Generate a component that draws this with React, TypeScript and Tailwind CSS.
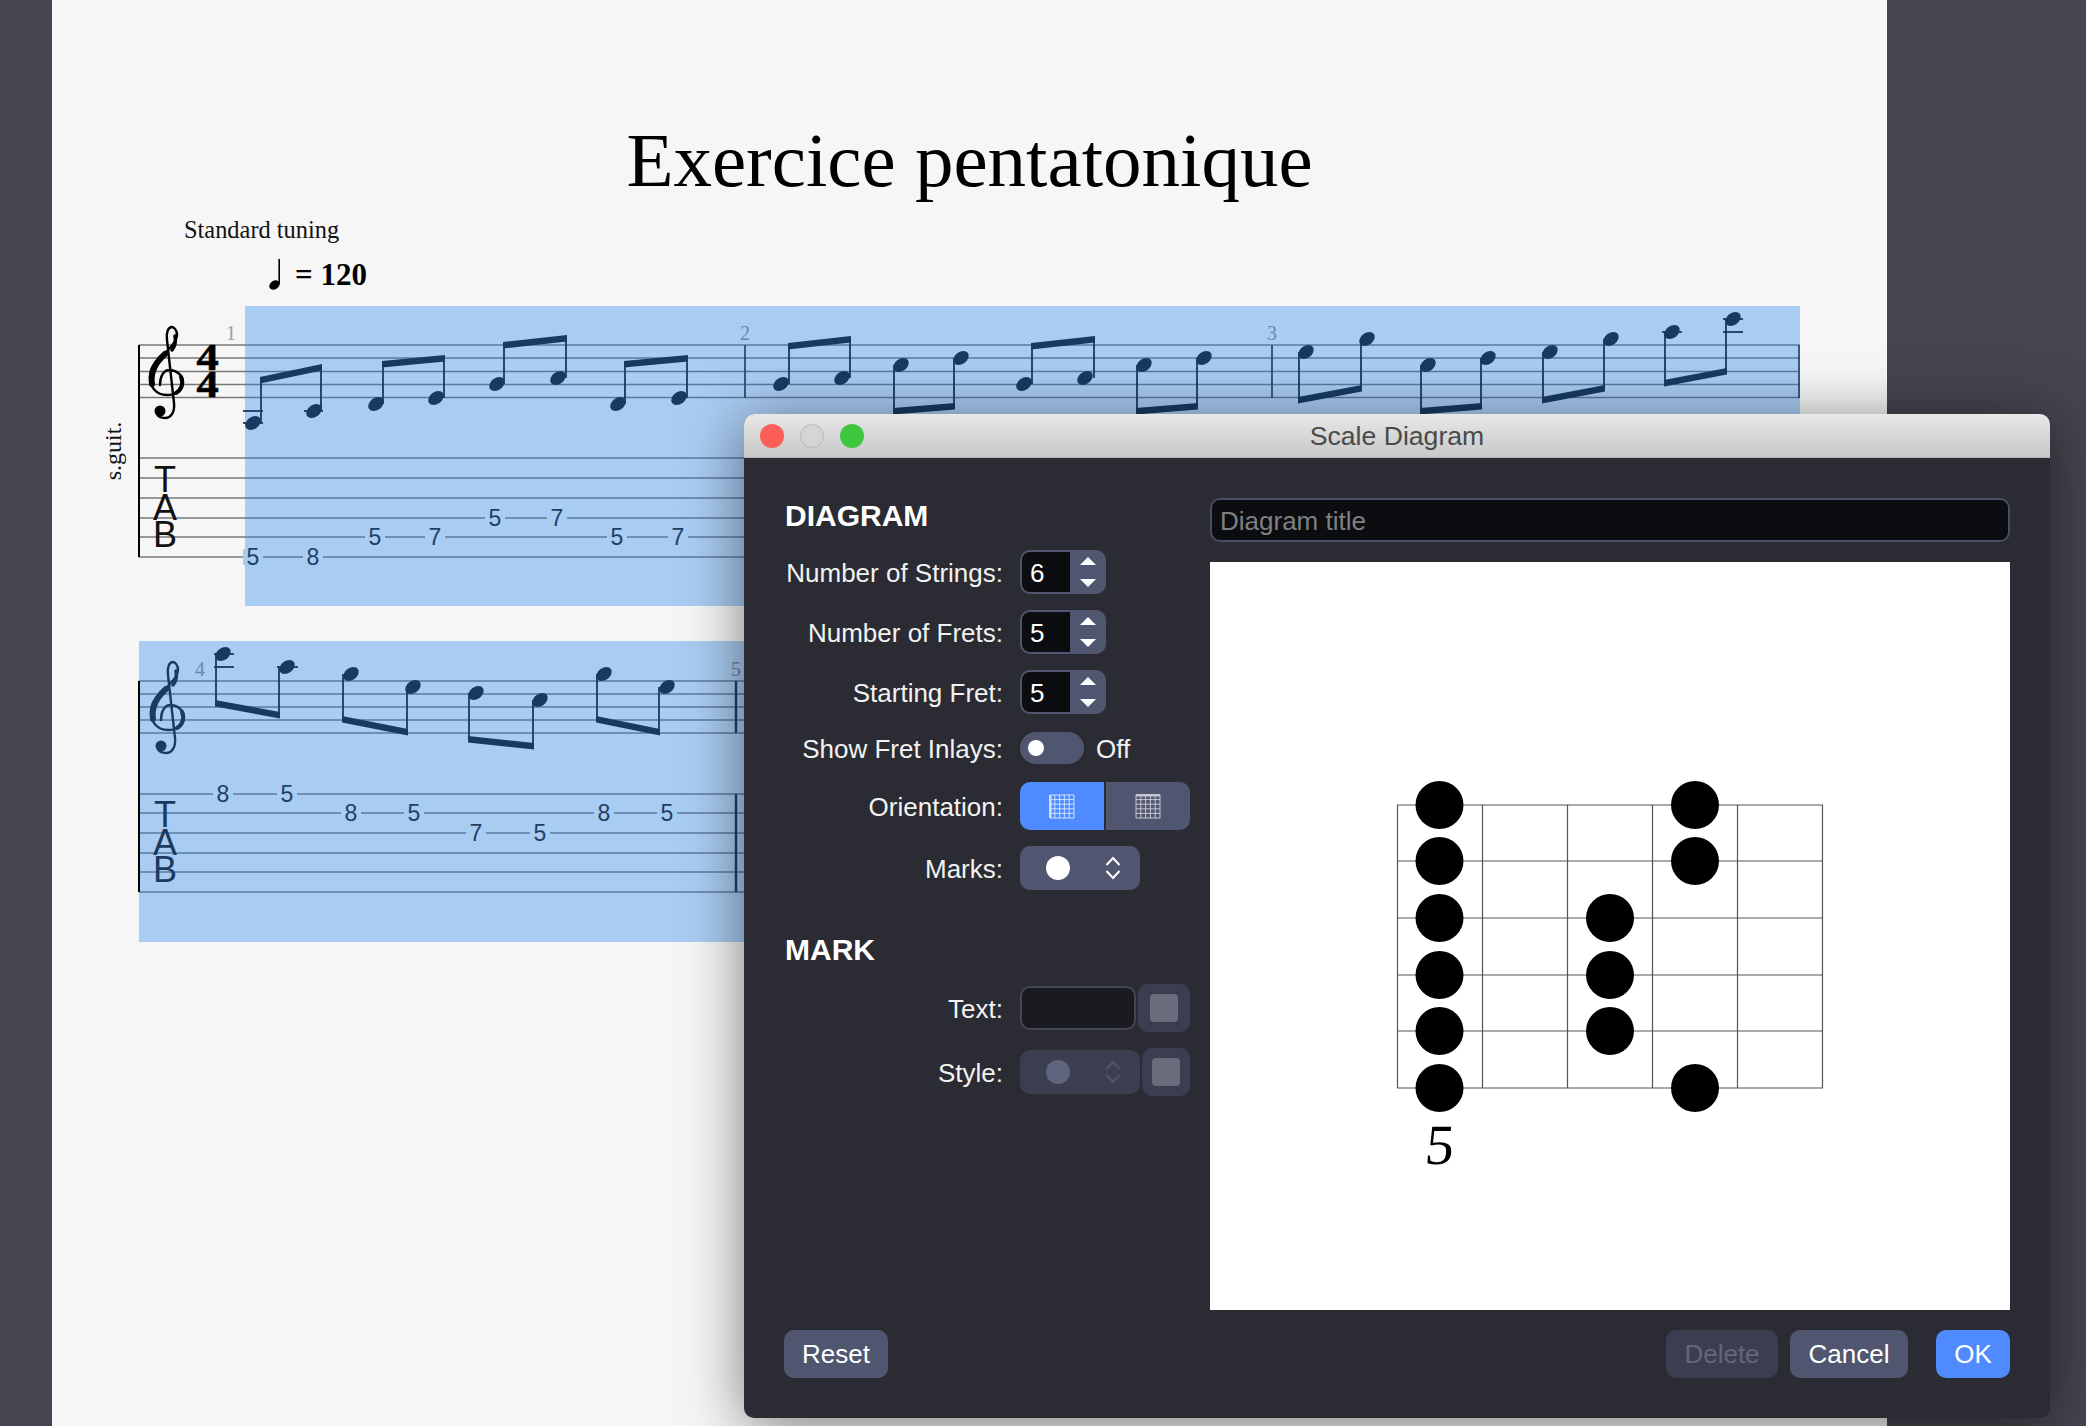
import React from 'react';

const NOTE = '#173a63';
const LINE_BLUE = '#5c7a9f';
const BLUE = '#a9ccf2';

type Group = { heads: [number, number, number][]; beam: [number, number] };

const SYSTEM_ONE: Group[] = [
  { heads: [[253, 423, 261], [314, 411, 321]], beam: [377, 364] },
  { heads: [[376, 404, 383], [436, 398, 444]], beam: [361, 355] },
  { heads: [[497, 384, 504], [558, 378, 566]], beam: [342, 335] },
  { heads: [[618, 404, 625], [679, 398, 687]], beam: [361, 355] },
  { heads: [[781, 384, 789], [842, 378, 850]], beam: [343, 336] },
  { heads: [[901, 365, 894], [961, 358, 954]], beam: [408, 403] },
  { heads: [[1024, 384, 1032], [1085, 378, 1094]], beam: [343, 336] },
  { heads: [[1144, 365, 1137], [1204, 358, 1197]], beam: [408, 403] },
  { heads: [[1306, 352, 1299], [1367, 339, 1361]], beam: [397, 385] },
  { heads: [[1428, 365, 1421], [1488, 358, 1481]], beam: [408, 403] },
  { heads: [[1550, 352, 1543], [1611, 339, 1604]], beam: [397, 385] },
  { heads: [[1672, 332, 1665], [1733, 319, 1726]], beam: [380, 368] },
];

const SYSTEM_TWO: Group[] = [
  { heads: [[223, 654, 216], [287, 667, 279]], beam: [700, 712] },
  { heads: [[351, 674, 343], [413, 687, 407]], beam: [716, 729] },
  { heads: [[476, 693, 469], [540, 700, 533]], beam: [736, 743] },
  { heads: [[604, 674, 597], [667, 687, 659]], beam: [716, 729] },
];

const TAB_ONE: [string, number, number][] = [
  ['5', 253, 557], ['8', 313, 557], ['5', 375, 537], ['7', 435, 537],
  ['5', 495, 518], ['7', 557, 518], ['5', 617, 537], ['7', 678, 537],
];

const TAB_TWO: [string, number, number][] = [
  ['8', 223, 794], ['5', 287, 794], ['8', 351, 813], ['5', 414, 813],
  ['7', 476, 833], ['5', 540, 833], ['8', 604, 813], ['5', 667, 813],
];

const STAFF_ONE = [345, 358, 371.5, 384.5, 397.5];
const TABLINES_ONE = [458, 478, 498, 518, 537, 557];
const STAFF_TWO = [681, 694, 707, 720, 733];
const TABLINES_TWO = [794, 813, 833, 853, 872, 892];

function Clef({ dx, dy, color }: { dx: number; dy: number; color: string }) {
  return (
    <g transform={`translate(${dx} ${dy})`} fill="none" stroke={color} strokeLinecap="round">
      <path
        strokeWidth="2.4"
        d="M160 385C160 376 164 370 169 370C177 370 183 376 183 382C183 391 175 395 167 395C156 395 150 387 150 377C150 364 160 358 168 350C174 344 177 340 177 335C177 330 174 327 172 327C168 327 166 333 167 340L174 403C175 412 171 418 165 418C161 418 158 416 157 414"
      />
      <path strokeWidth="6" d="M152 384C150 372 156 362 165 354" />
      <path strokeWidth="4" d="M181 377C184 384 181 390 176 393" />
      <path strokeWidth="3.5" d="M172 350C175 346 176 341 175 336" />
      <circle cx="160" cy="411" r="5.5" fill={color} stroke="none" />
    </g>
  );
}

function Beams({ groups }: { groups: Group[] }) {
  return (
    <g>
      {groups.map((g, i) => {
        const [a, b] = g.heads;
        const up = a[2] > a[0];
        return (
          <g key={i}>
            {g.heads.map(([x, y, sx], j) => (
              <g key={j}>
                <ellipse cx={x} cy={y} rx="8.5" ry="6" transform={`rotate(-35 ${x} ${y})`} fill={NOTE} />
                <line x1={sx} x2={sx} y1={y} y2={g.beam[j] + (up ? 2 : 4)} stroke={NOTE} strokeWidth="1.8" />
              </g>
            ))}
            <polygon
              points={`${a[2] - 1},${g.beam[0]} ${b[2] + 1},${g.beam[1]} ${b[2] + 1},${g.beam[1] + 6.5} ${a[2] - 1},${g.beam[0] + 6.5}`}
              fill={NOTE}
            />
          </g>
        );
      })}
    </g>
  );
}

function TabDigits({ digits }: { digits: [string, number, number][] }) {
  return (
    <g>
      {digits.map(([d, x, y], i) => (
        <g key={i}>
          <rect x={x - 10} y={y - 8} width="20" height="16" fill={BLUE} />
          <text x={x} y={y + 8} textAnchor="middle" fontSize="23" fill="#1f3f66" fontFamily="Liberation Sans">
            {d}
          </text>
        </g>
      ))}
    </g>
  );
}

function TabLetters({ y, color }: { y: number; color: string }) {
  return (
    <text textAnchor="middle" fontSize="36" fill={color} fontFamily="Liberation Sans">
      <tspan x="165" y={y}>T</tspan>
      <tspan x="165" y={y + 28}>A</tspan>
      <tspan x="165" y={y + 55}>B</tspan>
    </text>
  );
}

function ScoreOne() {
  return (
    <svg width="1835" height="310" viewBox="52 300 1835 310" className="block">
      <rect x="245" y="306" width="1555" height="300" fill={BLUE} />
      {[...STAFF_ONE, ...TABLINES_ONE].map((y) => (
        <g key={y}>
          <line x1="139" x2="245" y1={y} y2={y} stroke="#777" strokeWidth="1.3" />
          <line x1="245" x2="1800" y1={y} y2={y} stroke={LINE_BLUE} strokeWidth="1.3" />
        </g>
      ))}
      <line x1="139" x2="139" y1="345" y2="557" stroke="#000" strokeWidth="2" />
      <line x1="745" x2="745" y1="345" y2="398" stroke="#2b4d75" strokeWidth="1.8" />
      <line x1="1272" x2="1272" y1="345" y2="398" stroke="#2b4d75" strokeWidth="1.8" />
      <line x1="1799" x2="1799" y1="345" y2="398" stroke="#2b4d75" strokeWidth="1.8" />
      <Clef dx={0} dy={0} color="#000" />
      <g transform="translate(207.5 0) scale(1.2 1)">
        <text fontFamily="Liberation Serif" fontWeight="700" fontSize="37" textAnchor="middle" stroke="#000" strokeWidth="0.6">
          <tspan x="0" y="370">4</tspan>
          <tspan x="0" y="397">4</tspan>
        </text>
      </g>
      <text x="231" y="340" textAnchor="middle" fontSize="20" fill="#a0a0a0" fontFamily="Liberation Serif">1</text>
      <text x="745" y="340" textAnchor="middle" fontSize="20" fill="#6f87a5" fontFamily="Liberation Serif">2</text>
      <text x="1272" y="340" textAnchor="middle" fontSize="20" fill="#6f87a5" fontFamily="Liberation Serif">3</text>
      <text
        transform="translate(121 451) rotate(-90)"
        textAnchor="middle"
        fontSize="24"
        fontFamily="Liberation Serif"
        fill="#111"
      >
        s.guit.
      </text>
      <TabLetters y={492} color="#111" />
      <g stroke={NOTE} strokeWidth="1.8">
        <line x1="243" x2="263" y1="411" y2="411" />
        <line x1="243" x2="263" y1="423" y2="423" />
        <line x1="304" x2="323" y1="411" y2="411" />
        <line x1="1662" x2="1682" y1="332" y2="332" />
        <line x1="1723" x2="1743" y1="319" y2="319" />
        <line x1="1723" x2="1743" y1="332" y2="332" />
      </g>
      <Beams groups={SYSTEM_ONE} />
      <TabDigits digits={TAB_ONE} />
    </svg>
  );
}

function ScoreTwo() {
  return (
    <svg width="1835" height="320" viewBox="52 630 1835 320" className="block mt-[20px]">
      <rect x="139" y="641" width="700" height="301" fill={BLUE} />
      {[...STAFF_TWO, ...TABLINES_TWO].map((y) => (
        <line key={y} x1="139" x2="840" y1={y} y2={y} stroke={LINE_BLUE} strokeWidth="1.3" />
      ))}
      <line x1="139" x2="139" y1="681" y2="892" stroke="#000" strokeWidth="2" />
      <line x1="736" x2="736" y1="681" y2="733" stroke="#1f3f66" strokeWidth="2.4" />
      <line x1="736" x2="736" y1="794" y2="892" stroke="#1f3f66" strokeWidth="2.4" />
      <Clef dx={1} dy={335} color="#1b3a5f" />
      <text x="200" y="676" textAnchor="middle" fontSize="20" fill="#6f87a5" fontFamily="Liberation Serif">4</text>
      <text x="736" y="676" textAnchor="middle" fontSize="20" fill="#6f87a5" fontFamily="Liberation Serif">5</text>
      <TabLetters y={827} color="#1b3a5f" />
      <g stroke={NOTE} strokeWidth="1.8">
        <line x1="214" x2="234" y1="654" y2="654" />
        <line x1="214" x2="234" y1="667" y2="667" />
        <line x1="277" x2="298" y1="667" y2="667" />
      </g>
      <Beams groups={SYSTEM_TWO} />
      <TabDigits digits={TAB_TWO} />
    </svg>
  );
}

function Stepper({ value }: { value: string }) {
  return (
    <div className="flex h-[44px] w-[86px] rounded-[10px] bg-[#50566f] p-[2px]">
      <div className="flex w-[48px] items-center rounded-l-[8px] bg-[#0c0d10] pl-[8px] pt-[2px] text-[26px] text-white">{value}</div>
      <div className="flex flex-1 flex-col items-center justify-center gap-[14px] pl-[2px]">
        <svg width="16" height="8" viewBox="0 0 16 8"><path d="M8 0L16 8H0Z" fill="#fff" /></svg>
        <svg width="16" height="8" viewBox="0 0 16 8"><path d="M0 0H16L8 8Z" fill="#fff" /></svg>
      </div>
    </div>
  );
}

function Label({ children }: { children: React.ReactNode }) {
  return <div className="w-[219px] shrink-0 pt-[2px] text-right text-[26px] leading-[30px] text-[#f2f2f2]">{children}</div>;
}

function Row({ label, className, children }: { label: string; className: string; children: React.ReactNode }) {
  return (
    <div className={`flex items-center gap-[17px] ${className}`}>
      <Label>{label}</Label>
      {children}
    </div>
  );
}

function Chevrons({ color }: { color: string }) {
  return (
    <svg width="16" height="24" viewBox="0 0 16 24" fill="none" stroke={color} strokeWidth="2">
      <path d="M1.5 9L8 2L14.5 9" />
      <path d="M1.5 15L8 22L14.5 15" />
    </svg>
  );
}

function GridIcon({ color, thick }: { color: string; thick: 'left' | 'top' }) {
  const xs = [0, 4.8, 9.6, 14.4, 19.2, 24];
  const ys = [0, 4.6, 9.2, 13.8, 18.4, 23];
  return (
    <svg width="26" height="25" viewBox="-1 -1 26 25" stroke={color} strokeWidth="1" fill="none">
      {xs.map((x) => <line key={x} x1={x} x2={x} y1="0" y2="23" />)}
      {ys.map((y) => <line key={y} x1="0" x2="24" y1={y} y2={y} />)}
      {thick === 'left' ? <line x1="0" x2="0" y1="0" y2="23" strokeWidth="3" /> : <line x1="0" x2="24" y1="0" y2="0" strokeWidth="3" />}
    </svg>
  );
}

function ColorButton({ className }: { className: string }) {
  return (
    <div className={`flex h-[48px] items-center justify-center rounded-[10px] bg-[#3b3e50] ${className}`}>
      <div className="h-[28px] w-[28px] rounded-[4px] bg-[#6b6d7c]" />
    </div>
  );
}

function DotSelect({ dim }: { dim?: boolean }) {
  return (
    <div className={`flex h-[44px] w-[120px] items-center rounded-[10px] pl-[26px] ${dim ? 'bg-[#3b3e50]' : 'bg-[#50566f]'}`}>
      <div className={`h-[24px] w-[24px] rounded-full ${dim ? 'bg-[#5f647f]' : 'bg-white'}`} />
      <div className="ml-[35px]">
        <Chevrons color={dim ? '#50546a' : '#fff'} />
      </div>
    </div>
  );
}

function Fretboard() {
  const xs = [1397.5, 1482.5, 1567.5, 1652.5, 1737.5, 1822.5];
  const ys = [805, 861, 918, 975, 1031, 1088];
  const marks: [number, number][] = [
    [1439.5, 805], [1439.5, 861], [1439.5, 918], [1439.5, 975], [1439.5, 1031], [1439.5, 1088],
    [1610, 918], [1610, 975], [1610, 1031],
    [1695, 805], [1695, 861], [1695, 1088],
  ];
  return (
    <svg width="800" height="748" viewBox="1210 562 800 748" className="block bg-white">
      {ys.map((y) => <line key={y} x1="1397" x2="1823" y1={y} y2={y} stroke="#555" strokeWidth="1.2" />)}
      {xs.map((x) => <line key={x} x1={x} x2={x} y1="805" y2="1088" stroke="#555" strokeWidth="1.2" />)}
      {marks.map(([x, y]) => <circle key={`${x}-${y}`} cx={x} cy={y} r="24" fill="#000" />)}
      <text transform="translate(1438 1164) skewX(-6)" textAnchor="middle" fontSize="57" fontFamily="Liberation Serif" fill="#000">5</text>
    </svg>
  );
}

function ScaleDialog() {
  return (
    <div className="absolute left-[744px] top-[414px] h-[1004px] w-[1306px] overflow-hidden rounded-[10px] bg-[#2b2c33] font-['Liberation_Sans',sans-serif] shadow-[0_8px_60px_rgba(0,0,0,0.5)]">
      <div className="relative flex h-[44px] items-center justify-center border-b border-[#b5b5b5] bg-gradient-to-b from-[#e8e8e8] to-[#c8c8c8] pt-[3px] text-[26.6px] text-[#4a4a4a]">
        <div className="absolute left-[16px] top-[10px] flex gap-[16px]">
          <div className="h-[24px] w-[24px] rounded-full bg-[#fb5f57]" />
          <div className="h-[24px] w-[24px] rounded-full border border-[#b9b9b9] bg-[#d5d5d5]" />
          <div className="h-[24px] w-[24px] rounded-full bg-[#3fc63f]" />
        </div>
        Scale Diagram
      </div>

      <div className="flex h-[960px] flex-col pl-[40px] pr-[40px] pt-[40px]">
        <div className="flex h-[812px] justify-between">
          <div className="flex flex-col">
            <h2 className="pl-[1px] text-[30px] font-bold leading-[36px] text-white">DIAGRAM</h2>
            <Row label="Number of Strings:" className="mt-[16px]"><Stepper value="6" /></Row>
            <Row label="Number of Frets:" className="mt-[16px]"><Stepper value="5" /></Row>
            <Row label="Starting Fret:" className="mt-[16px]"><Stepper value="5" /></Row>
            <Row label="Show Fret Inlays:" className="mt-[18px]">
              <div className="flex h-[32px] w-[64px] items-center rounded-full bg-[#50566f] pl-[8px]">
                <div className="h-[16px] w-[16px] rounded-full bg-white" />
              </div>
              <span className="-ml-[5px] pt-[2px] text-[26px] leading-[30px] text-[#f2f2f2]">Off</span>
            </Row>
            <Row label="Orientation:" className="mt-[18px]">
              <div className="flex h-[48px] w-[170px] gap-[2px]">
                <div className="flex flex-1 items-center justify-center rounded-l-[10px] bg-[#4f8bff]">
                  <GridIcon color="#cfe0ff" thick="left" />
                </div>
                <div className="flex flex-1 items-center justify-center rounded-r-[10px] bg-[#50566f]">
                  <GridIcon color="#c4c6d0" thick="top" />
                </div>
              </div>
            </Row>
            <Row label="Marks:" className="mt-[16px]"><DotSelect /></Row>

            <h2 className="mt-[42px] pl-[1px] text-[30px] font-bold leading-[36px] text-white">MARK</h2>
            <Row label="Text:" className="mt-[16px]">
              <div className="flex items-center gap-[2px]">
                <div className="h-[44px] w-[116px] rounded-[10px] border-2 border-[#43454f] bg-[#1a1b21]" />
                <ColorButton className="w-[52px]" />
              </div>
            </Row>
            <Row label="Style:" className="mt-[16px]">
              <div className="flex items-center gap-[2px]">
                <DotSelect dim />
                <ColorButton className="w-[48px]" />
              </div>
            </Row>
          </div>

          <div className="flex w-[800px] flex-col">
            <div className="flex h-[44px] items-center rounded-[10px] border-2 border-[#4a4b66] bg-[#0c0d11] pl-[8px] pt-[2px] text-[26px] text-[#808080]">
              Diagram title
            </div>
            <div className="mt-[20px]"><Fretboard /></div>
          </div>
        </div>

        <div className="mt-[20px] flex h-[48px] items-stretch text-[26px] text-white">
          <button className="w-[104px] rounded-[10px] bg-[#50566f]">Reset</button>
          <button className="ml-auto w-[112px] rounded-[10px] bg-[#3b3e50] text-[#64667a]">Delete</button>
          <button className="ml-[12px] w-[118px] rounded-[10px] bg-[#50566f]">Cancel</button>
          <button className="ml-[28px] w-[74px] rounded-[10px] bg-[#4f8bff]">OK</button>
        </div>
      </div>
    </div>
  );
}

export default function App() {
  return (
    <div className="relative h-[1426px] w-[2086px] overflow-hidden bg-[#44454f]">
      <main className="ml-[52px] h-full w-[1835px] bg-[#f6f6f6] font-['Liberation_Serif',serif] text-black">
        <h1 className="pt-[118px] text-center text-[77px] leading-[84px]">Exercice pentatonique</h1>
        <div className="mt-[14px] pl-[132px] text-[24.4px] leading-[28px] text-[#111]">Standard tuning</div>
        <div className="mt-[15px] flex h-[32px] items-center pl-[216px]">
          <svg width="14" height="32" viewBox="0 0 14 32">
            <ellipse cx="6.5" cy="26" rx="5.6" ry="4.2" transform="rotate(-35 6.5 26)" fill="#000" />
            <line x1="11.2" x2="11.2" y1="0" y2="25" stroke="#000" strokeWidth="1.6" />
          </svg>
          <span className="ml-[13px] text-[31px] font-bold leading-[32px]">= 120</span>
        </div>
        <div className="mt-[9px]">
          <ScoreOne />
          <ScoreTwo />
        </div>
      </main>
      <ScaleDialog />
    </div>
  );
}
